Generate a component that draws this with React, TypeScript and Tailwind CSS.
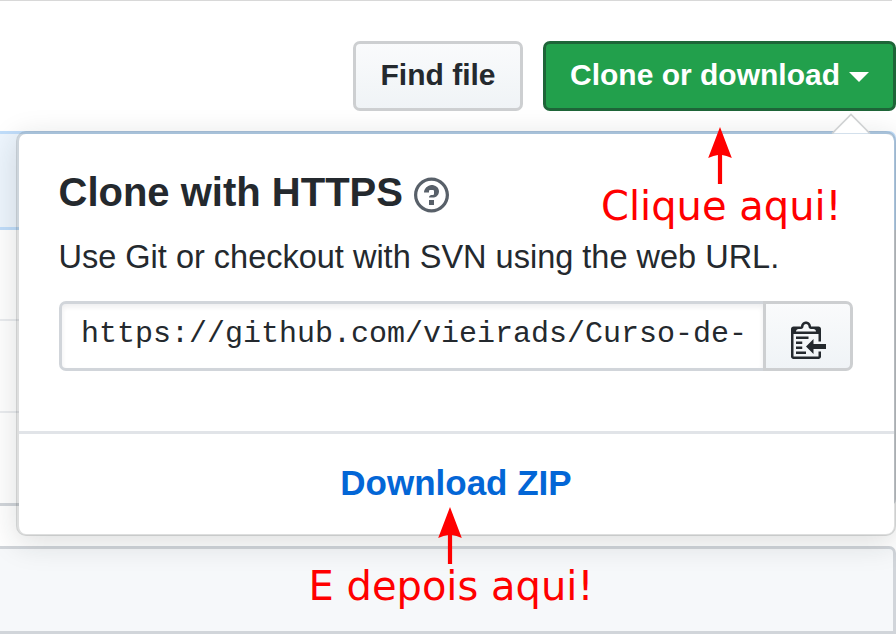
import React from "react";

function QuestionIcon() {
  return (
    <svg className="h-10 w-[35px] fill-[#586069]" viewBox="0 0 14 16">
      <path
        fillRule="evenodd"
        d="M6 10h2v2H6v-2zm4-3.5C10 8.64 8 9 8 9H6c0-.55.45-1 1-1h.5c.28 0 .5-.22.5-.5v-1c0-.28-.22-.5-.5-.5h-1c-.28 0-.5.22-.5.5V7H4c0-1.5 1.5-3 3-3s3 1 3 2.5zM7 2.3c3.14 0 5.7 2.56 5.7 5.7s-2.56 5.7-5.7 5.7A5.71 5.71 0 0 1 1.3 8c0-3.14 2.56-5.7 5.7-5.7zM7 1C3.14 1 0 4.14 0 8s3.14 7 7 7 7-3.14 7-7-3.14-7-7-7z"
      />
    </svg>
  );
}

function ClippyIcon() {
  return (
    <svg className="h-10 w-[35px] fill-[#24292e]" viewBox="0 0 14 16">
      <path
        fillRule="evenodd"
        d="M2 13h4v1H2v-1zm5-6H2v1h5V7zm2 3V8l-3 3 3 3v-2h5v-2H9zM4.5 9H2v1h2.5V9zM2 12h2.5v-1H2v1zm9 1h1v2c-.02.28-.11.52-.3.7-.19.18-.42.28-.7.3H1c-.55 0-1-.45-1-1V4c0-.55.45-1 1-1h3c0-1.11.89-2 2-2 1.11 0 2 .89 2 2h3c.55 0 1 .45 1 1v5h-1V6H1v9h10v-2zM2 5h8c0-.55-.45-1-1-1H8c-.55 0-1-.45-1-1s-.45-1-1-1-1 .45-1 1-.45 1-1 1H3c-.55 0-1 .45-1 1z"
      />
    </svg>
  );
}

function RedArrow() {
  return (
    <svg className="h-[57px] w-6 fill-[#ff0000]" viewBox="0 0 24 57">
      <path d="M12 0L23.8 31Q18 28.3 14.1 28V57H9.9V28Q6 28.3 0.2 31Z" />
    </svg>
  );
}

function Toolbar() {
  return (
    <div className="flex h-[131px] flex-col">
      <div className="mr-1 h-px bg-[#d8d8d8]" />
      <div className="mt-10 flex justify-end gap-5">
        <button className="flex h-[70px] w-[170px] justify-center rounded-[7px] border-[3px] border-[#cdcfd1] bg-linear-to-b from-[#fafbfc] to-[#eff3f6] bg-origin-border text-[30px] leading-[62px] font-bold text-[#24292e]">
          Find file
        </button>
        <button className="flex h-[70px] w-[353px] rounded-[7px] border-[3px] border-[#1e6538] bg-[#22a04c] pl-6 text-[30px] leading-[62px] font-bold text-white">
          Clone or download
          <span className="mt-7 ml-[9px] h-0 w-0 border-x-10 border-t-10 border-x-transparent border-t-white" />
        </button>
      </div>
    </div>
  );
}

function FileList() {
  return (
    <div>
      <div className="h-[99px] rounded-tr-[7px] border-y-[3px] border-r-[3px] border-[#c0ddfa] bg-[#edf5fd]" />
      <div className="h-[276px] rounded-br-[7px] border-r-[3px] border-b-[3px] border-[#d1d5da]">
        <div className="h-[91px] border-b-2 border-[#eaecef]" />
        <div className="h-[92px] border-b-2 border-[#eaecef]" />
      </div>
      <div className="mt-10 h-[88px] rounded-tr-[7px] border-y-[3px] border-r-[3px] border-[#d1d5da] bg-[#f6f8fa]" />
    </div>
  );
}

function ClonePopover() {
  return (
    <div className="absolute top-[131px] left-4 h-[405px] w-[880px] rounded-[10px] border-t-[3px] border-r-2 border-b-2 border-l-[3px] border-[rgba(27,31,35,0.15)] bg-white bg-clip-padding text-[#24292e] shadow-[0_7px_30px_rgba(27,31,35,0.15)]">
      <svg className="absolute -top-[21px] right-[23px] h-[21px] w-[40px]" viewBox="0 0 40 21">
        <path d="M2 20.5L20 2.5L38 20.5Z" fill="#ffffff" />
        <path d="M1 20.5L20 1.5L39 20.5" fill="none" stroke="#d0d2d3" strokeWidth="1.6" />
      </svg>
      <div className="flex h-[300px] flex-col border-b-[3px] border-[#e1e4e8] pr-[41px] pl-10">
        <div className="mt-[37px] -ml-[0.5px] flex h-[42px] items-center gap-[11.5px]">
          <h4 className="text-[40px] leading-[42px] font-bold whitespace-nowrap">Clone with HTTPS</h4>
          <div className="pt-[5px]">
            <QuestionIcon />
          </div>
        </div>
        <p className="mt-6 -ml-[0.5px] text-[32.5px] leading-10 whitespace-nowrap">
          Use Git or checkout with SVN using the web URL.
        </p>
        <div className="mt-6 flex h-[70px] w-[794px]">
          <div className="w-[704px] overflow-hidden rounded-l-[7px] border-y-[3px] border-l-[3px] border-[#d1d5da] pl-[19px] font-['Liberation_Mono',monospace] text-[30px] leading-[60px] whitespace-nowrap shadow-[inset_0_3px_5px_rgba(27,31,35,0.075)]">
            https://github.com/vieirads/Curso-de-
          </div>
          <button className="flex w-[90px] rounded-r-[7px] border-[3px] border-[#cdcfd1] bg-linear-to-b from-[#fafbfc] to-[#eff3f6] bg-origin-border pt-[15px] pl-[25px]">
            <ClippyIcon />
          </button>
        </div>
      </div>
      <a className="block pr-px text-center text-[35px] leading-[97px] font-bold text-[#0366d6]">Download ZIP</a>
    </div>
  );
}

export default function App() {
  return (
    <div className="relative h-[634px] w-[896px] overflow-hidden bg-white font-['Liberation_Sans',Arial,sans-serif]">
      <Toolbar />
      <FileList />
      <ClonePopover />
      <div className="absolute top-[127px] left-[708px]">
        <RedArrow />
      </div>
      <div className="absolute top-[182px] left-[601px] font-['DejaVu_Sans',sans-serif] text-[40px] leading-[48px] whitespace-nowrap text-[#ff0000]">
        Clique aqui!
      </div>
      <div className="absolute top-[507px] left-[438px]">
        <RedArrow />
      </div>
      <div className="absolute top-[562px] left-[308.5px] font-['DejaVu_Sans',sans-serif] text-[40px] leading-[48px] whitespace-nowrap text-[#ff0000]">
        E depois aqui!
      </div>
    </div>
  );
}
